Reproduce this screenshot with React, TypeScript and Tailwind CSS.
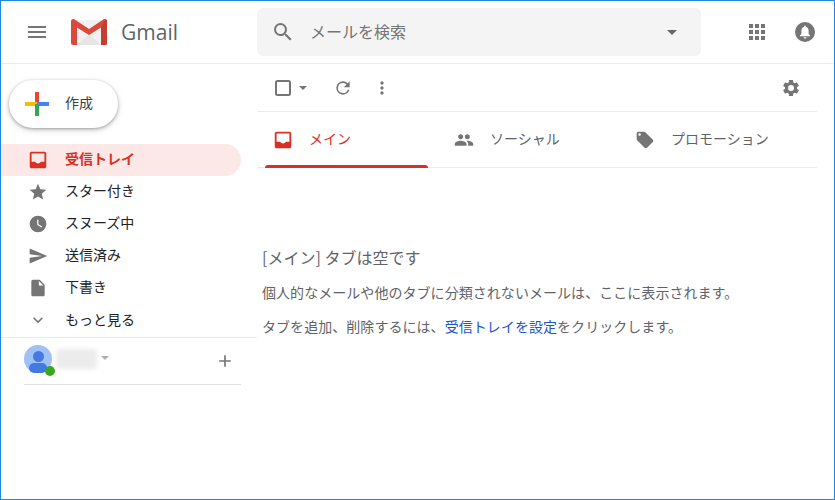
const font = '"Noto Sans CJK JP", "Noto Sans", sans-serif';

function Icon({ d, size = 24, className = 'fill-[#757575]' }: { d: string; size?: number; className?: string }) {
  return (
    <svg width={size} height={size} viewBox="0 0 24 24" className={`shrink-0 ${className}`}>
      <path d={d} />
    </svg>
  );
}

const paths = {
  menu: 'M3 18h18v-2H3v2zm0-5h18v-2H3v2zm0-7v2h18V6H3z',
  search: 'M15.5 14h-.79l-.28-.27A6.47 6.47 0 0 0 16 9.5 6.5 6.5 0 1 0 9.5 16c1.61 0 3.09-.59 4.23-1.57l.27.28v.79l5 4.99L20.49 19l-4.99-5zm-6 0C7.01 14 5 11.99 5 9.5S7.01 5 9.5 5 14 7.01 14 9.5 11.99 14 9.5 14z',
  apps: 'M4 4h4v4H4zM10 4h4v4h-4zM16 4h4v4h-4zM4 10h4v4H4zM10 10h4v4h-4zM16 10h4v4h-4zM4 16h4v4H4zM10 16h4v4h-4zM16 16h4v4h-4z',
  inbox: 'M19 3H5c-1.1 0-2 .9-2 2v14c0 1.1.9 2 2 2h14c1.1 0 2-.9 2-2V5c0-1.1-.9-2-2-2zm0 11h-4c-.6 1-1.7 1.8-3 1.8S9.6 15 9 14H5V5h14v9z',
  star: 'M12 17.27 18.18 21l-1.64-7.03L22 9.24l-7.19-.61L12 2 9.19 8.63 2 9.24l5.46 4.73L5.82 21z',
  clock: 'M12 2a10 10 0 1 0 0 20 10 10 0 0 0 0-20zm4.2 14.2L11 13V7h1.5v5.2l4.5 2.7-.8 1.3z',
  send: 'M2.01 21 23 12 2.01 3 2 10l15 2-15 2z',
  draft: 'M6 2c-1.1 0-2 .9-2 2v16c0 1.1.9 2 2 2h12c1.1 0 2-.9 2-2V8l-6-6H6zm7 7V3.5L18.5 9H13z',
  chevron: 'M7.41 8.59 12 13.17l4.59-4.58L18 10l-6 6-6-6z',
  plus: 'M19 13h-6v6h-2v-6H5v-2h6V5h2v6h6v2z',
  refresh: 'M17.65 6.35A7.96 7.96 0 0 0 12 4a8 8 0 1 0 7.73 10h-2.08A6 6 0 1 1 12 6c1.66 0 3.14.69 4.22 1.78L13 11h7V4l-2.35 2.35z',
  more: 'M12 8a2 2 0 1 0 0-4 2 2 0 0 0 0 4zm0 2a2 2 0 1 0 0 4 2 2 0 0 0 0-4zm0 6a2 2 0 1 0 0 4 2 2 0 0 0 0-4z',
  gear: 'M19.14 12.94c.04-.3.06-.61.06-.94s-.02-.64-.07-.94l2.03-1.58a.49.49 0 0 0 .12-.61l-1.92-3.32a.49.49 0 0 0-.59-.22l-2.39.96a7.03 7.03 0 0 0-1.62-.94l-.36-2.54a.48.48 0 0 0-.48-.41h-3.84a.47.47 0 0 0-.47.41l-.36 2.54c-.59.24-1.13.57-1.62.94l-2.39-.96a.48.48 0 0 0-.59.22L2.74 8.87a.48.48 0 0 0 .12.61l2.03 1.58c-.05.3-.09.63-.09.94s.02.64.07.94l-2.03 1.58a.49.49 0 0 0-.12.61l1.92 3.32c.12.22.37.29.59.22l2.39-.96c.5.38 1.03.7 1.62.94l.36 2.54c.05.24.24.41.48.41h3.84c.24 0 .44-.17.47-.41l.36-2.54c.59-.24 1.13-.56 1.62-.94l2.39.96c.22.08.47 0 .59-.22l1.92-3.32a.49.49 0 0 0-.12-.61l-2.01-1.58zM12 15.6A3.6 3.6 0 1 1 12 8.4a3.6 3.6 0 0 1 0 7.2z',
  people: 'M16 11c1.66 0 2.99-1.34 2.99-3S17.66 5 16 5s-3 1.34-3 3 1.34 3 3 3zm-8 0c1.66 0 2.99-1.34 2.99-3S9.66 5 8 5 5 6.34 5 8s1.34 3 3 3zm0 2c-2.33 0-7 1.17-7 3.5V19h14v-2.5C15 14.17 10.33 13 8 13zm8 0c-.29 0-.62.02-.97.05C16.19 13.89 17 15.02 17 16.5V19h6v-2.5c0-2.33-4.67-3.5-7-3.5z',
  tag: 'M21.41 11.58l-9-9A2 2 0 0 0 11 2H4a2 2 0 0 0-2 2v7c0 .55.22 1.05.59 1.42l9 9c.36.36.86.58 1.41.58s1.05-.22 1.41-.59l7-7c.37-.36.59-.86.59-1.41s-.23-1.06-.59-1.42zM5.5 7A1.5 1.5 0 1 1 5.5 4a1.5 1.5 0 0 1 0 3z',
  bell: 'M12 2a10 10 0 1 0 0 20 10 10 0 0 0 0-20zm0 16.5c-.8 0-1.5-.6-1.5-1.3h3c0 .7-.7 1.3-1.5 1.3zm5-2.2H7v-1l1.4-1.3v-3.3c0-2 1.1-3.6 2.8-4v-.5c0-.5.4-.8.8-.8s.8.3.8.8v.5c1.7.4 2.8 2 2.8 4V14l1.4 1.3v1z',
};

function Caret({ className = 'border-x-[4px] border-t-[4px] border-t-[#757575]' }: { className?: string }) {
  return <span className={`h-0 w-0 border-x-transparent ${className}`} />;
}

function GmailMark() {
  return (
    <svg width="36" height="26" viewBox="0 0 36 26">
      <path d="M2 1h32v23a2 2 0 0 1-2 2H4a2 2 0 0 1-2-2z" fill="#f1f1f1" />
      <path d="M6 26 18 15l12 11z" fill="#e6e6e6" />
      <path d="M0 2.5C0 .5 2-.6 3.7.6L18 10 32.3.6C34-.6 36 .5 36 2.5V24a2 2 0 0 1-2 2h-4V8.5L18 16 6 8.5V26H2a2 2 0 0 1-2-2z" fill="#d9493c" />
      <path d="M30 8.5V26h4a2 2 0 0 0 2-2V2.5c0-1-.5-1.8-1.2-2.2z" fill="#c43d2f" />
    </svg>
  );
}

function NavRow({ icon, label, active = false, size = 20, textClass = 'mb-[4px]' }: { icon: string; label: string; active?: boolean; size?: number; textClass?: string }) {
  return (
    <div className={`flex h-8 w-[240px] items-center rounded-r-full pl-[25px] text-[14px] ${active ? 'bg-[#fce8e6] font-bold text-[#d93025]' : 'text-[#202124]'}`}>
      <div className="flex w-6 justify-center">
        <Icon d={icon} size={size} className={active ? 'fill-[#d93025]' : 'fill-[#757575]'} />
      </div>
      <span className={`ml-[15px] ${textClass}`}>{label}</span>
    </div>
  );
}

function Tab({ icon, label, size = 20, active = false }: { icon: string; label: string; size?: number; active?: boolean }) {
  return (
    <div className={`relative flex h-full w-[181px] items-center pl-[15px] text-[14px] ${active ? 'text-[#d93025]' : 'text-[#5f6368]'}`}>
      <div className="flex w-[22px] justify-center">
        <Icon d={icon} size={size} className={active ? 'fill-[#d93025]' : 'fill-[#757575]'} />
      </div>
      <span className="mb-[2px] ml-[15px]">{label}</span>
      {active && <span className="absolute bottom-[-1px] left-[8px] h-[3px] w-[163px] rounded-t-[3px] bg-[#d93025]" />}
    </div>
  );
}

export default function App() {
  return (
    <div className="flex h-[500px] w-[835px] flex-col overflow-hidden border border-[#1e88e5] bg-white" style={{ fontFamily: font }}>
      <header className="flex h-[63px] shrink-0 items-center border-b border-[#e8eaed]">
        <div className="flex w-[256px] shrink-0 items-center pl-[24px]">
          <Icon d={paths.menu} />
          <div className="ml-[22px]"><GmailMark /></div>
          <span className="ml-[14px] text-[21px] leading-none text-[#5f6368]" style={{ fontFamily: '"Open Sans", sans-serif' }}>Gmail</span>
        </div>
        <div className="flex h-12 w-[444px] items-center rounded-[6px] bg-[#f4f4f4] pl-[14px] pr-[24px]">
          <Icon d={paths.search} />
          <span className="mb-[2px] ml-[15px] text-[16px] text-[#757575]">メールを検索</span>
          <span className="ml-auto flex"><Caret className="border-x-[5px] border-t-[5px] border-t-[#666666]" /></span>
        </div>
        <div className="ml-auto flex items-center gap-[24px] pr-[17px]">
          <Icon d={paths.apps} />
          <Icon d={paths.bell} />
        </div>
      </header>
      <div className="flex min-h-0 flex-1">
        <aside className="w-[256px] shrink-0">
          <div className="ml-[8px] mt-[16px] flex h-12 w-[109px] items-center rounded-full bg-white pl-[16px] shadow-[0_1px_3px_rgba(60,64,67,0.4),0_2px_6px_rgba(60,64,67,0.2)]">
            <svg width="24" height="24" viewBox="0 0 24 24">
              <rect x="10" y="0" width="4" height="12" fill="#ea4335" />
              <rect x="0" y="10" width="12" height="4" fill="#fbbc04" />
              <rect x="10" y="12" width="4" height="12" fill="#34a853" />
              <rect x="12" y="10" width="12" height="4" fill="#4285f4" />
            </svg>
            <span className="mb-[4px] ml-[16px] text-[14px] text-[#3c4043]">作成</span>
          </div>
          <nav className="mt-[16px]">
            <NavRow icon={paths.inbox} label="受信トレイ" active size={22} />
            <NavRow icon={paths.star} label="スター付き" />
            <NavRow icon={paths.clock} label="スヌーズ中" />
            <NavRow icon={paths.send} label="送信済み" />
            <NavRow icon={paths.draft} label="下書き" />
            <NavRow icon={paths.chevron} label="もっと見る" textClass="mb-[2px]" />
          </nav>
          <div className="mt-[1px] border-t border-[#e8eaed] pt-[7px]">
            <div className="ml-[23px] flex h-[39px] w-[217px] items-start">
              <div className="relative h-7 w-7 rounded-full bg-[#a0c0f8]">
                <span className="absolute left-[9px] top-[6px] h-[11px] w-[11px] rounded-full bg-[#4479e1]" />
                <span className="absolute left-[5px] top-[18px] h-[10px] w-[18px] rounded-full bg-[#4479e1]" />
                <span className="absolute left-[21px] top-[21px] h-[10px] w-[10px] rounded-full bg-[#38a91e]" />
              </div>
              <div className="ml-[4px] mt-[4px] h-[20px] w-[41px] rounded-[3px] bg-[#ececec] blur-[2px]" />
              <span className="ml-[4px] mt-[11px] flex"><Caret className="border-x-[4px] border-t-[4px] border-t-[#b0b0b0]" /></span>
              <span className="ml-auto mr-[6px] mt-[6px] flex"><Icon d={paths.plus} size={20} /></span>
            </div>
            <div className="ml-[23px] w-[217px] border-b border-[#e0e0e0]" />
          </div>
        </aside>
        <main className="min-w-0 flex-1">
          <div className="flex h-12 w-[560px] items-center border-b border-[#e8eaed] pl-[18px] pr-[16px]">
            <svg width="16" height="16" viewBox="0 0 16 16">
              <rect x="1" y="1" width="14" height="14" rx="1.5" fill="none" stroke="#757575" strokeWidth="2" />
            </svg>
            <span className="ml-[8px] flex"><Caret /></span>
            <span className="ml-[26px] flex"><Icon d={paths.refresh} size={20} /></span>
            <span className="ml-[19px] flex"><Icon d={paths.more} size={20} /></span>
            <span className="ml-auto flex"><Icon d={paths.gear} size={20} /></span>
          </div>
          <div className="flex h-[56px] w-[560px] border-b border-[#e8eaed]">
            <Tab icon={paths.inbox} label="メイン" size={22} active />
            <Tab icon={paths.people} label="ソーシャル" />
            <Tab icon={paths.tag} label="プロモーション" />
          </div>
          <div className="pl-[5px] pt-[77px] text-[#5f6368]">
            <p className="text-[16px] leading-[24px]">[メイン] タブは空です</p>
            <p className="mt-[13px] text-[14px] leading-[20px] tracking-[0.05px]">個人的なメールや他のタブに分類されないメールは、ここに表示されます。</p>
            <p className="mt-[14px] text-[14px] leading-[20px] tracking-[0.05px]">タブを追加、削除するには、<span className="text-[#1a56c9]">受信トレイを設定</span>をクリックします。</p>
          </div>
        </main>
      </div>
    </div>
  );
}
